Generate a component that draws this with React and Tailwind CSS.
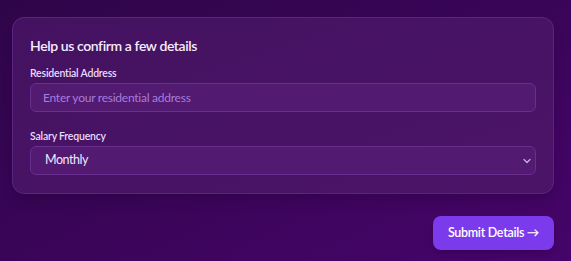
import { ChevronDown } from 'lucide-react';

const Field = ({ label, children, className = '' }) => (
   <div className={className}>
      <label className="block text-[10.5px] leading-[15px] font-semibold tracking-[-0.2px] text-[#eadcff] mb-0.5">{label}</label>
      {children}
   </div>
);

const App = () => {
   return (
      <div
         className="w-[571px] h-[261px] overflow-hidden bg-gradient-to-br from-[#2f0549] via-[#3a0558] to-[#46046a] pl-3 pr-[17px] pt-[17px]"
         style={{ fontFamily: 'Lato, "Noto Sans", sans-serif' }}
      >
         {/* Card */}
         <div className="rounded-xl border border-[#5a2580] bg-gradient-to-br from-[#441260] to-[#4c1468] px-[17px] pt-[18px] pb-[18px] shadow-lg">
            <h2 className="text-[14px] leading-5 font-semibold tracking-[-0.4px] text-[#f4ecff] mb-2.5">
               Help us confirm a few details
            </h2>

            <Field label="Residential Address">
               <div className="h-[29px] rounded-md border border-[#6a2d90] bg-[#521a70] px-3 flex items-center">
                  <span className="text-[12px] tracking-[-0.25px] text-[#a57ddf]">Enter your residential address</span>
               </div>
            </Field>

            <Field label="Salary Frequency" className="mt-[17px]">
               <div className="h-[29px] rounded-md border border-[#6a2d90] bg-[#521a70] pl-[14px] pr-[2px] flex items-center justify-between">
                  <span className="text-[12.5px] tracking-[-0.45px] text-[#f1e7ff]">Monthly</span>
                  <ChevronDown size={12} strokeWidth={2.4} className="text-[#c9b3e6]" />
               </div>
            </Field>
         </div>

         <div className="flex justify-end mt-[22px]">
            <button className="w-[121px] h-[34px] rounded-lg bg-[#7c3aed] text-white text-[12.5px] font-semibold tracking-[-0.3px] shadow-md">
               Submit Details →
            </button>
         </div>
      </div>
   );
};

export default App;
